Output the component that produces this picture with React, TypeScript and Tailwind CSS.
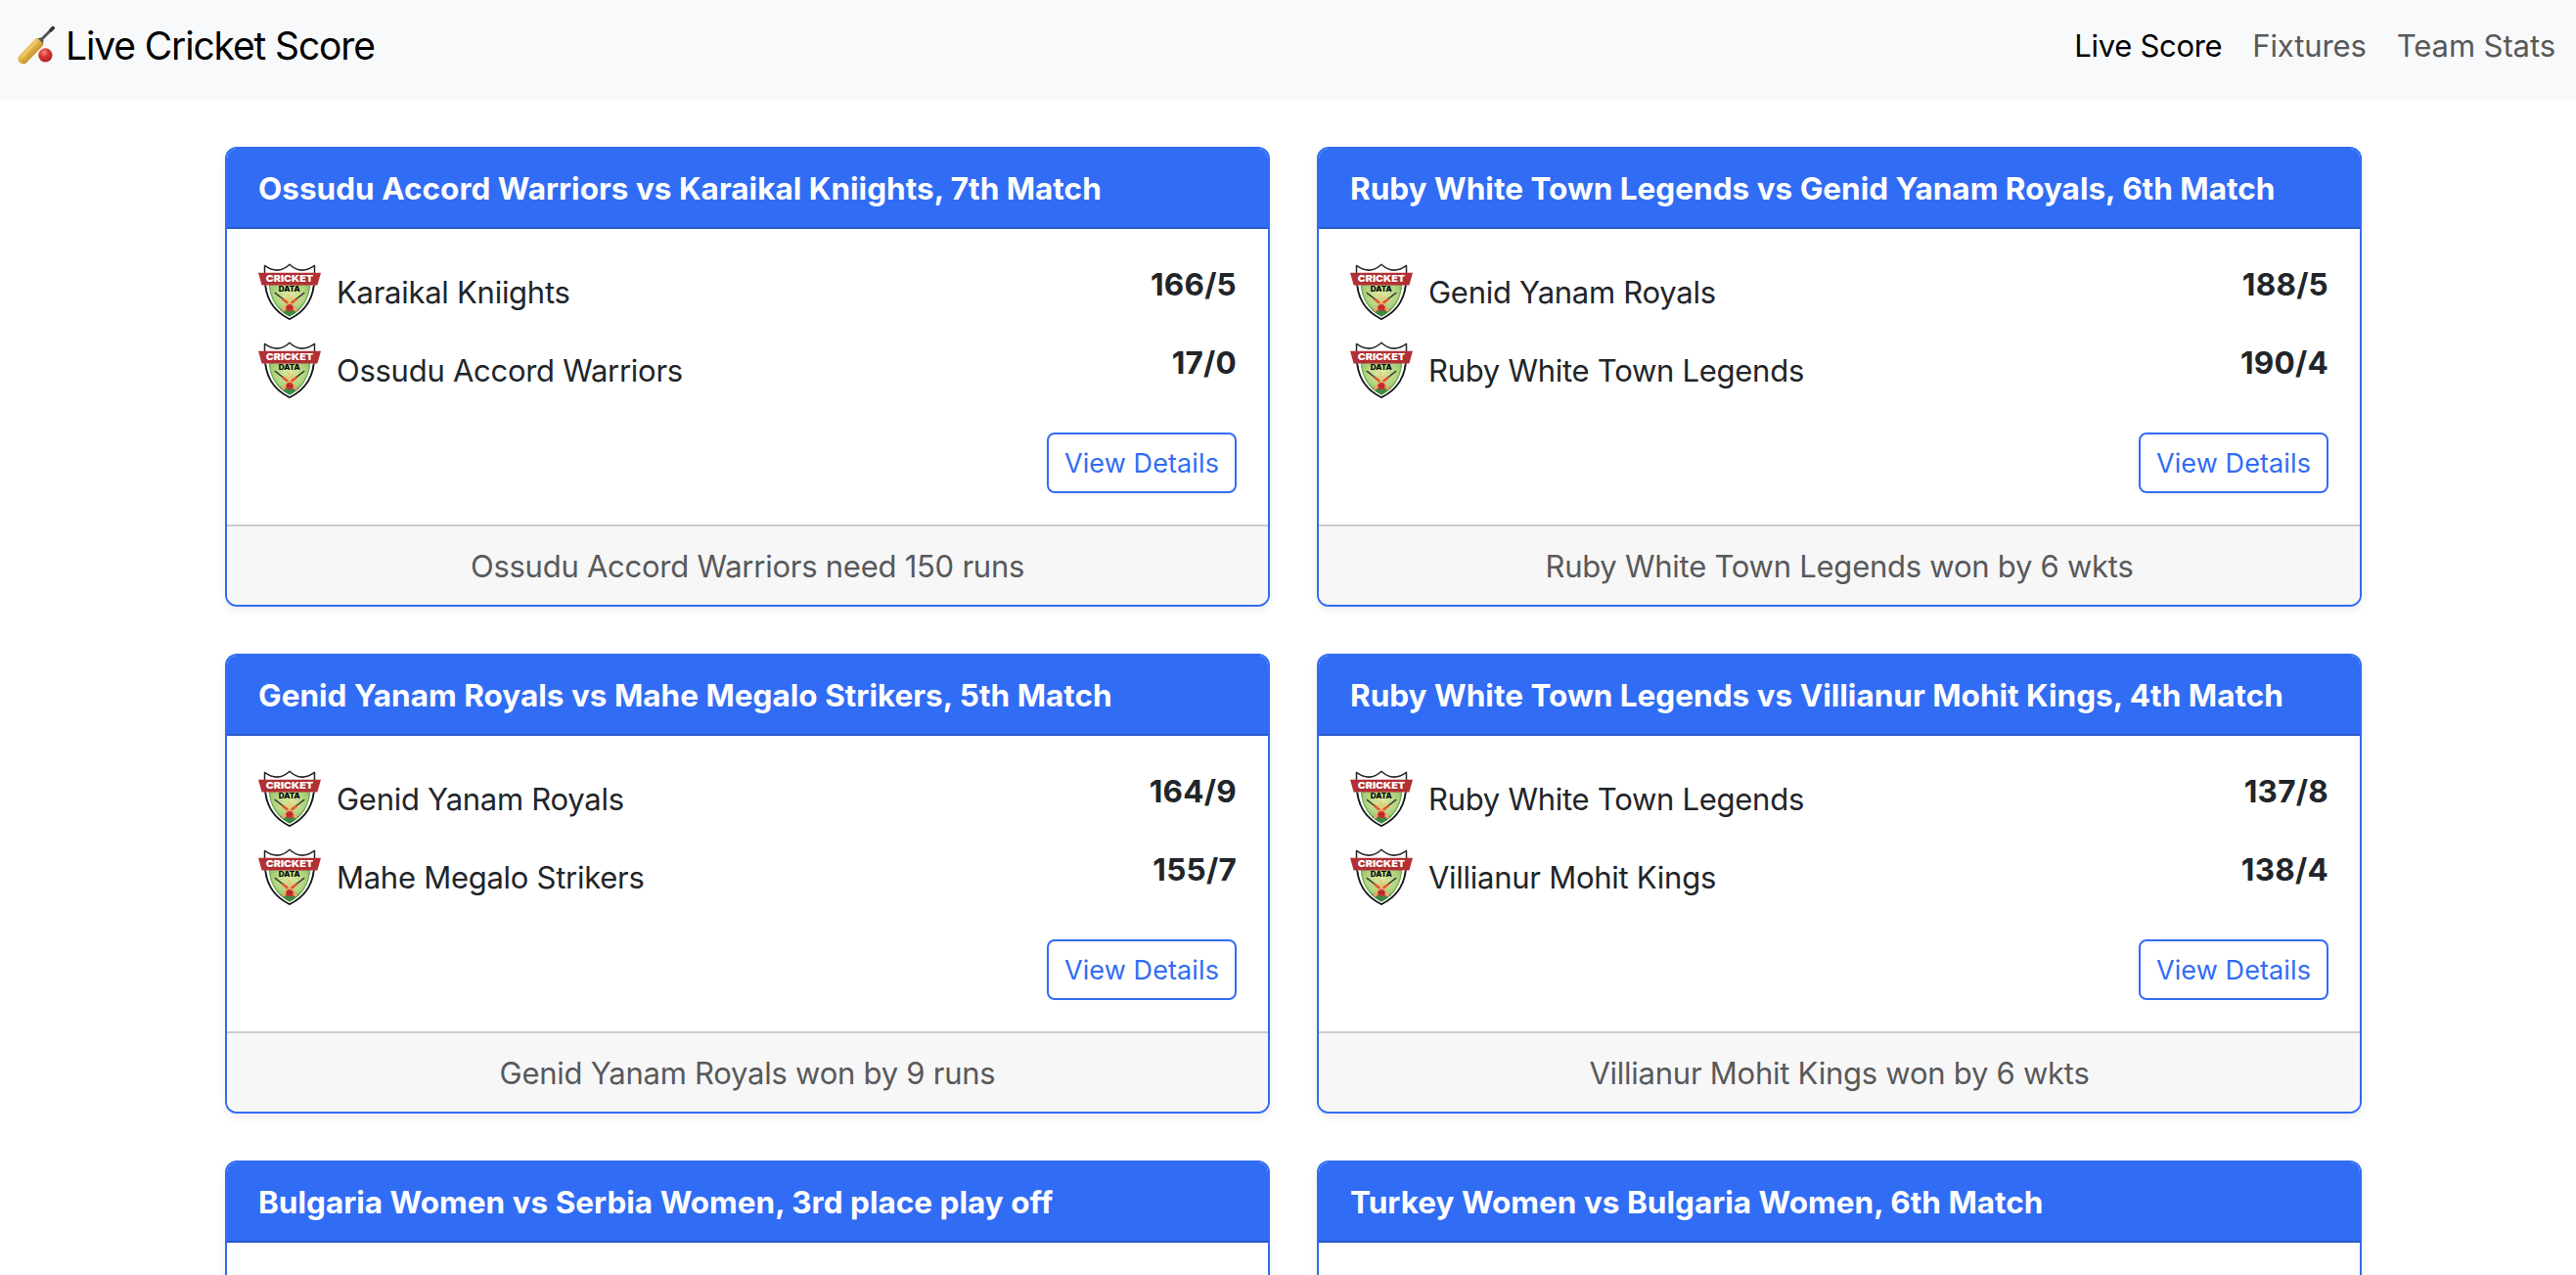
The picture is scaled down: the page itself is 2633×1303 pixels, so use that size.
type Team = { name: string; score: string };
type Match = { title: string; teams: Team[]; status?: string };

const matches: Match[] = [
  {
    title: 'Ossudu Accord Warriors vs Karaikal Kniights, 7th Match',
    teams: [
      { name: 'Karaikal Kniights', score: '166/5' },
      { name: 'Ossudu Accord Warriors', score: '17/0' },
    ],
    status: 'Ossudu Accord Warriors need 150 runs',
  },
  {
    title: 'Ruby White Town Legends vs Genid Yanam Royals, 6th Match',
    teams: [
      { name: 'Genid Yanam Royals', score: '188/5' },
      { name: 'Ruby White Town Legends', score: '190/4' },
    ],
    status: 'Ruby White Town Legends won by 6 wkts',
  },
  {
    title: 'Genid Yanam Royals vs Mahe Megalo Strikers, 5th Match',
    teams: [
      { name: 'Genid Yanam Royals', score: '164/9' },
      { name: 'Mahe Megalo Strikers', score: '155/7' },
    ],
    status: 'Genid Yanam Royals won by 9 runs',
  },
  {
    title: 'Ruby White Town Legends vs Villianur Mohit Kings, 4th Match',
    teams: [
      { name: 'Ruby White Town Legends', score: '137/8' },
      { name: 'Villianur Mohit Kings', score: '138/4' },
    ],
    status: 'Villianur Mohit Kings won by 6 wkts',
  },
  {
    title: 'Bulgaria Women vs Serbia Women, 3rd place play off',
    teams: [],
  },
  {
    title: 'Turkey Women vs Bulgaria Women, 6th Match',
    teams: [],
  },
];

function BatIcon() {
  return (
    <svg className="h-10 w-[39px] shrink-0" viewBox="0 0 39 40" fill="none">
      <defs>
        <linearGradient id="blade" x1="8" y1="20" x2="17" y2="29" gradientUnits="userSpaceOnUse">
          <stop offset="0" stopColor="#f3d27a" />
          <stop offset="0.45" stopColor="#e6b94c" />
          <stop offset="1" stopColor="#c8922f" />
        </linearGradient>
        <radialGradient id="ball" cx="0.4" cy="0.3" r="0.75">
          <stop offset="0" stopColor="#f58a80" />
          <stop offset="0.4" stopColor="#dc3a34" />
          <stop offset="1" stopColor="#a81d1f" />
        </radialGradient>
      </defs>
      <path d="M36 1.8 22.5 15.3" stroke="#55565a" strokeWidth="3" strokeLinecap="round" />
      <path d="M36.2 1.6 34 3.8" stroke="#333437" strokeWidth="3.6" strokeLinecap="round" />
      <path d="M19.5 12.2 24 11.6 26.6 14.4 25.6 18.6Z" fill="#55565a" />
      <path
        d="M18.2 12.3Q19.6 11.3 20.8 12.3L25.8 17.4Q26.8 18.6 25.8 19.8L8.6 37.6Q6.6 39.4 3.4 37.8Q-0.8 35.2 0.5 31Z"
        fill="url(#blade)"
      />
      <path d="M19.6 15.2 4.2 31.8" stroke="#f4d884" strokeWidth="1.2" opacity="0.7" />
      <circle cx="28.4" cy="29.4" r="7.1" fill="url(#ball)" />
      <path d="M23.2 29.6Q26.8 32.8 30.8 34.8" stroke="#b83a38" strokeWidth="0.8" opacity="0.7" />
    </svg>
  );
}

function TeamLogo() {
  return (
    <svg className="h-16 w-16 shrink-0" viewBox="0 0 64 64" fill="none">
      <defs>
        <radialGradient id="field" cx="0.5" cy="0.35" r="0.62">
          <stop offset="0" stopColor="#dfeaa2" />
          <stop offset="0.5" stopColor="#b5d583" />
          <stop offset="1" stopColor="#74b555" />
        </radialGradient>
        <clipPath id="inner">
          <path d="M10.8 22H53.2C53.2 40 44 51.5 32 57.6C20 51.5 10.8 40 10.8 22Z" />
        </clipPath>
      </defs>
      <path
        d="M6.5 5.4Q20.5 15.4 32 4.2Q43.5 15.4 57.5 5.4V18C57.5 40 47 53 32 60.2C17 53 6.5 40 6.5 18Z"
        fill="#fff"
        stroke="#242628"
        strokeWidth="1.5"
        strokeLinejoin="round"
      />
      <path d="M7.6 26C9.6 42.5 19 53.6 32 60M56.4 26C54.4 42.5 45 53.6 32 60" stroke="#17191a" strokeWidth="1.3" />
      <g clipPath="url(#inner)">
        <rect x="8" y="22" width="48" height="38" fill="url(#field)" />
        <path d="M11 25.5C12 40 20 51 32 57.6C44 51 52 40 53 25.5" stroke="#63ab4c" strokeWidth="2" />
        <path d="M18 51.5Q32 47 46 51.5L32 60Z" fill="#3e8a45" />
      </g>
      <path d="M28.6 37.5 31.2 41M35.6 36.5 33.4 41M32 35.5V40M30 34.5 30.6 36.5" stroke="#efb25a" strokeWidth="1" />
      <path d="M17.2 33.4 26 40.2M46.8 33.4 38 40.2" stroke="#34372f" strokeWidth="1.4" strokeLinecap="round" />
      <path d="M28.4 42.3 38.4 50.8M35.6 42.3 25.6 50.8" stroke="#f0a468" strokeWidth="3.4" strokeLinecap="round" />
      <path d="M24.6 39.2 30 43.6M39.4 39.2 34 43.6" stroke="#e2562c" strokeWidth="2.5" />
      <circle cx="32" cy="48.6" r="3.7" fill="#c8322f" />
      <path d="M29.4 48.4H34.6" stroke="#8f1f20" strokeWidth="0.8" />
      <path d="M0 12.8H64L60.4 25.4H3.6Z" fill="#b23034" />
      <text
        x="7.8"
        y="22.3"
        textLength="48.4"
        lengthAdjust="spacingAndGlyphs"
        className="fill-white font-[Inter] text-[9.6px] font-black"
      >
        CRICKET
      </text>
      <text
        x="20.8"
        y="32.2"
        textLength="22"
        lengthAdjust="spacingAndGlyphs"
        className="fill-black font-[Inter] text-[7px] font-extrabold"
      >
        DATA
      </text>
    </svg>
  );
}

function TeamRow({ name, score }: Team) {
  return (
    <div className="flex h-16 items-start justify-between">
      <div className="flex items-start gap-4">
        <TeamLogo />
        <span className="pt-[9px] tracking-[-0.27px]">{name}</span>
      </div>
      <span className="pt-px text-[31.5px] font-bold tracking-[0.25px]">{score}</span>
    </div>
  );
}

function MatchCard({ title, teams, status }: Match) {
  return (
    <article className="flex h-[470px] flex-col rounded-xl border-2 border-[#316cf4] bg-white shadow-[0_4px_8px_rgba(0,0,0,0.075)]">
      <header className="rounded-t-[10px] border-b-2 border-[#2959c9] bg-[#316cf4] px-8 pt-[17px] pb-[15px] text-[31.5px] font-bold tracking-[0.01px] text-white">
        {title}
      </header>
      {status && (
        <>
          <div className="flex flex-1 flex-col p-8">
            <div className="flex h-36 flex-col gap-4">
              {teams.map((team) => (
                <TeamRow key={team.name} {...team} />
              ))}
            </div>
            <button className="mt-8 flex h-[62px] w-[194px] items-center justify-center self-end rounded-lg border-2 border-[#316cf4] pt-px text-[27px] tracking-[0.1px] text-[#316cf4]">
              View Details
            </button>
          </div>
          <footer className="rounded-b-[10px] border-t-2 border-[#cbcbcb] bg-[#f7f7f7] pt-[17px] pb-[15px] text-center tracking-[-0.25px] text-[#58595c]">
            {status}
          </footer>
        </>
      )}
    </article>
  );
}

export default function App() {
  return (
    <div className="h-[1303px] overflow-hidden bg-white font-[Inter,sans-serif] text-[31px] leading-[48px] text-[#212529]">
      <nav className="flex h-[102px] items-center justify-between bg-[#f8f9fb] pr-[21px] pb-2 pl-[18px]">
        <a className="flex items-center gap-[10px] text-[39px] leading-[60px] tracking-[-1.14px] text-black">
          <BatIcon />
          Live Cricket Score
        </a>
        <div className="flex gap-[31px] text-[#585858]">
          <a className="tracking-[-0.3px] text-black">Live Score</a>
          <a className="tracking-[-0.12px]">Fixtures</a>
          <a className="tracking-[-0.08px]">Team Stats</a>
        </div>
      </nav>
      <main className="ml-[230px] grid w-[2184px] grid-cols-2 gap-12 pt-12">
        {matches.map((match) => (
          <MatchCard key={match.title} {...match} />
        ))}
      </main>
    </div>
  );
}
